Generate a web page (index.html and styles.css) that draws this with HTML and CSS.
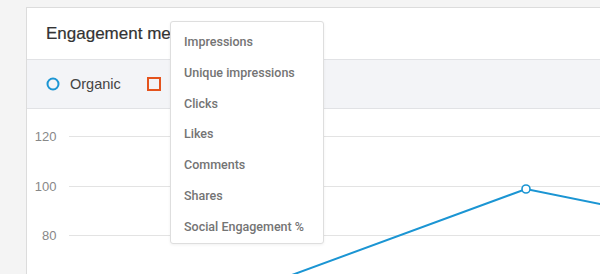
FILE: index.html
```html
<!DOCTYPE html>
<html>
<head>
<meta charset="utf-8">
<link rel="stylesheet" href="styles.css">
</head>
<body>
<div class="page">
  <div class="card">
    <div class="card-header">
      <h2 class="title">Engagement metrics</h2>
    </div>
    <div class="legend">
      <div class="legend-item">
        <svg class="legend-icon" width="14" height="14" viewBox="0 0 14 14"><circle cx="7" cy="7" r="5.5" fill="none" stroke="#1b95d3" stroke-width="2"/></svg>
        <span class="legend-label">Organic</span>
      </div>
      <div class="legend-item legend-item-paid">
        <svg class="legend-icon" width="14" height="14" viewBox="0 0 14 14"><rect x="1" y="1" width="12" height="12" fill="none" stroke="#e4531d" stroke-width="2"/></svg>
        <span class="legend-label">Paid</span>
      </div>
    </div>
    <div class="chart">
      <div class="grid">
        <div class="row"><span class="tick">120</span><span class="gridline"></span></div>
        <div class="row"><span class="tick">100</span><span class="gridline"></span></div>
        <div class="row"><span class="tick">80</span><span class="gridline"></span></div>
      </div>
      <svg class="series" width="620" height="170" viewBox="0 0 620 170">
        <polyline points="233,177.7 499,80 613,103.1" fill="none" stroke="#1b95d3" stroke-width="2"/>
        <circle cx="499" cy="80" r="4" fill="#fff" stroke="#1b95d3" stroke-width="1.6"/>
      </svg>
    </div>
  </div>
  <ul class="menu">
    <li class="menu-item">Impressions</li>
    <li class="menu-item">Unique impressions</li>
    <li class="menu-item">Clicks</li>
    <li class="menu-item">Likes</li>
    <li class="menu-item">Comments</li>
    <li class="menu-item">Shares</li>
    <li class="menu-item">Social Engagement %</li>
  </ul>
</div>
</body>
</html>
```
FILE: styles.css
```css
html, body {
  margin: 0;
  padding: 0;
}
body {
  background: #f4f4f4;
  font-family: "Liberation Sans", Arial, sans-serif;
  overflow: hidden;
  width: 600px;
  height: 274px;
}
.page {
  position: relative;
  padding: 7px 0 0 26px;
}
.card {
  width: 640px;
  background: #fff;
  border: 1px solid #dcdcdc;
  box-sizing: border-box;
}
.card-header {
  height: 51px;
  display: flex;
  align-items: center;
  padding-left: 19px;
}
.title {
  margin: 0;
  font-size: 17px;
  font-weight: normal;
  color: #333;
  white-space: nowrap;
  -webkit-text-stroke: 0.2px #333;
}
.legend {
  height: 48px;
  background: #f3f4f7;
  border-top: 1px solid #e1e2e5;
  border-bottom: 1px solid #e1e2e5;
  display: flex;
  align-items: center;
  padding-left: 19px;
  gap: 26px;
}
.legend-item {
  display: flex;
  align-items: center;
  gap: 10px;
}
.legend-item-paid {
  gap: 14px;
}
.legend-icon {
  display: block;
}
.legend-label {
  font-size: 14.5px;
  color: #444;
}
.chart {
  position: relative;
  height: 170px;
}
.grid {
  padding-top: 3px;
}
.row {
  height: 49.5px;
  display: flex;
  align-items: center;
}
.tick {
  width: 29.5px;
  text-align: right;
  font-size: 13px;
  color: #888;
}
.gridline {
  flex: 1;
  margin-left: 12.5px;
  height: 1px;
  background: #e3e3e3;
}
.series {
  position: absolute;
  left: 0;
  top: 0;
  overflow: visible;
}
.menu {
  position: absolute;
  left: 170px;
  top: 21px;
  width: 154px;
  height: 223px;
  box-sizing: border-box;
  margin: 0;
  padding: 5px 0 0;
  list-style: none;
  background: #fff;
  border: 1px solid #dedede;
  border-radius: 3px;
  box-shadow: 0 1px 3px rgba(0, 0, 0, 0.06);
}
.menu-item {
  height: 30.8px;
  line-height: 30.8px;
  padding-left: 13px;
  font-family: Roboto, "Liberation Sans", sans-serif;
  font-weight: 500;
  font-size: 12.5px;
  color: #747474;
  white-space: nowrap;
}
```
